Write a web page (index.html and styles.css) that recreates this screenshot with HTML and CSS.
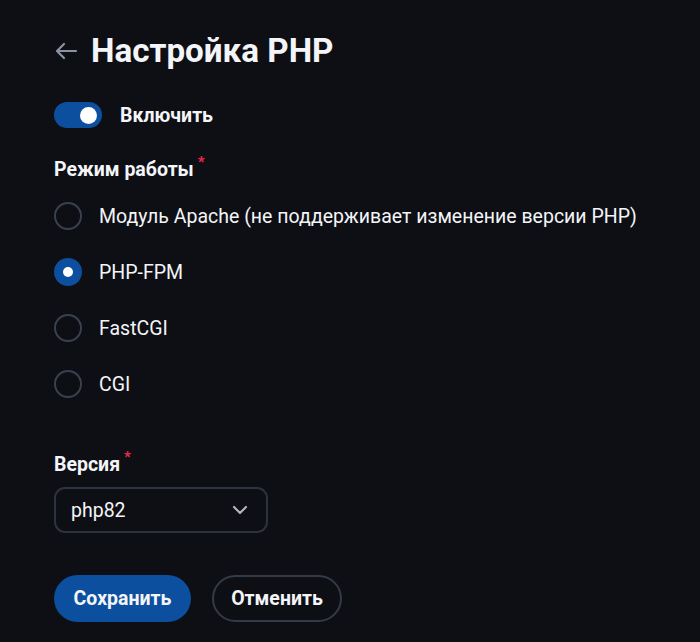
FILE: index.html
```html
<!DOCTYPE html>
<html lang="ru">
<head>
<meta charset="utf-8">
<title>Настройка PHP</title>
<link rel="stylesheet" href="styles.css">
</head>
<body>
<main class="page">
  <header class="head">
    <svg class="back" width="24" height="18" viewBox="0 0 24 18" aria-hidden="true">
      <path d="M22 9H3M10 2L3 9l7 7" fill="none" stroke="#8b93a3" stroke-width="2.2" stroke-linecap="round" stroke-linejoin="round"/>
    </svg>
    <h1 class="title">Настройка PHP</h1>
  </header>

  <label class="switch-row">
    <span class="switch"><span class="knob"></span></span>
    <span class="switch-label">Включить</span>
  </label>

  <section class="group">
    <div class="label">Режим работы<span class="req">*</span></div>
    <div class="radios">
      <div class="radio-row"><span class="radio"></span><span class="radio-text">Модуль Apache (не поддерживает изменение версии PHP)</span></div>
      <div class="radio-row"><span class="radio checked"></span><span class="radio-text">PHP-FPM</span></div>
      <div class="radio-row"><span class="radio"></span><span class="radio-text">FastCGI</span></div>
      <div class="radio-row"><span class="radio"></span><span class="radio-text">CGI</span></div>
    </div>
  </section>

  <section class="group version">
    <div class="label">Версия<span class="req">*</span></div>
    <div class="select">
      <span class="select-value">php82</span>
      <svg width="16" height="10" viewBox="0 0 16 10" aria-hidden="true">
        <path d="M2 2l6 6 6-6" fill="none" stroke="#aab3c2" stroke-width="2.2" stroke-linecap="round" stroke-linejoin="round"/>
      </svg>
    </div>
  </section>

  <div class="actions">
    <button class="btn primary">Сохранить</button>
    <button class="btn outline">Отменить</button>
  </div>
</main>
</body>
</html>
```
FILE: styles.css
```css
* { box-sizing: border-box; }
html, body { margin: 0; background: #0e0f14; }
body {
  font-family: Roboto, "Noto Sans", sans-serif;
  color: #f3f5f8;
  width: 700px;
  height: 642px;
  overflow: hidden;
}
.page {
  padding: 30px 0 0 54px;
  display: flex;
  flex-direction: column;
}
.head {
  display: flex;
  align-items: center;
  gap: 13px;
  height: 42px;
}
.back { display: block; }
.title {
  margin: 0;
  font-size: 33.2px;
  font-weight: 700;
  line-height: 42px;
}
.switch-row {
  display: flex;
  align-items: center;
  gap: 18px;
  margin-top: 29px;
  height: 28px;
}
.switch {
  width: 48px;
  height: 26px;
  border-radius: 13px;
  background: #0c4f9e;
  display: flex;
  align-items: center;
  justify-content: flex-end;
  padding-right: 5px;
}
.knob {
  width: 17px;
  height: 17px;
  border-radius: 50%;
  background: #fff;
}
.switch-label {
  font-size: 19.5px;
  font-weight: 700;
}
.group { display: flex; flex-direction: column; }
.label {
  font-size: 19.5px;
  font-weight: 700;
  line-height: 24px;
  margin-top: 21px;
}
.req {
  color: #ee2a4b;
  font-size: 15px;
  vertical-align: 9px;
  margin-left: 4px;
}
.radios {
  display: flex;
  flex-direction: column;
  margin-top: 6px;
}
.radio-row {
  display: flex;
  align-items: center;
  gap: 17px;
  height: 56px;
}
.radio {
  width: 28px;
  height: 28px;
  border-radius: 50%;
  border: 2px solid #394050;
  display: flex;
  align-items: center;
  justify-content: center;
}
.radio.checked {
  border: none;
  background: #0c4f9e;
}
.radio.checked::after {
  content: "";
  width: 10px;
  height: 10px;
  border-radius: 50%;
  background: #fff;
}
.radio-text { font-size: 19.5px; }
.version .label { margin-top: 33px; }
.select {
  margin-top: 10px;
  width: 214px;
  height: 46px;
  border: 2px solid #2c323e;
  border-radius: 11px;
  display: flex;
  align-items: center;
  justify-content: space-between;
  padding: 0 18px 0 15px;
}
.select-value { font-size: 19.5px; }
.select svg { display: block; }
.actions {
  display: flex;
  gap: 21px;
  margin-top: 42px;
}
.btn {
  height: 47px;
  border-radius: 24px;
  font-family: Roboto, "Noto Sans", sans-serif;
  font-size: 19.5px;
  font-weight: 700;
  color: #f3f5f8;
  padding: 0;
}
.primary {
  background: #0c4f9e;
  border: none;
  width: 137px;
}
.outline {
  background: transparent;
  border: 2px solid #343a47;
  width: 130px;
}
```
